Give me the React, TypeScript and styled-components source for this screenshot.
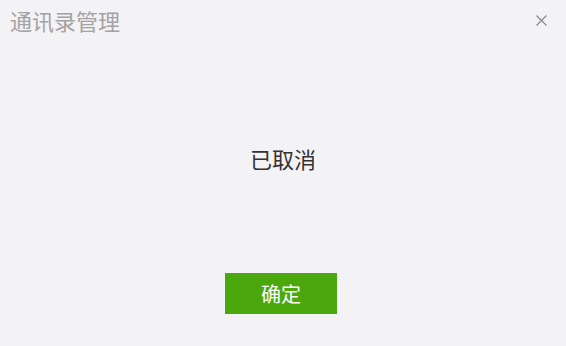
import React from "react";
import styled, { createGlobalStyle } from "styled-components";

const GlobalStyle = createGlobalStyle`
    html, body {
        margin: 0;
        padding: 0;
        background: #f3f2f5;
    }
    body {
        font-family: "Noto Sans CJK SC", "Noto Sans", sans-serif;
    }
`;

const Dialog = styled.div`
    width: 566px;
    height: 346px;
    display: flex;
    flex-direction: column;
    background: #f3f2f5;
    box-sizing: border-box;
`;

const HeaderRow = styled.div`
    display: flex;
    justify-content: space-between;
    align-items: flex-start;
    padding: 5px 18px 0 10px;
    height: 40px;
    box-sizing: border-box;
`;

const Title = styled.h1`
    margin: 0;
    font-size: 22px;
    line-height: 30px;
    font-weight: normal;
    color: #a3a3a3;
`;

const CloseButton = styled.button`
    border: none;
    background: none;
    padding: 0;
    margin-top: 9px;
    width: 13px;
    height: 13px;
    cursor: pointer;
    display: flex;
`;

const Body = styled.div`
    flex: 1;
    display: flex;
    flex-direction: column;
    align-items: center;
`;

const Message = styled.p`
    margin: 103px 0 0;
    font-size: 22px;
    line-height: 30px;
    color: #333333;
`;

const ConfirmButton = styled.button`
    margin-top: 100px;
    width: 112px;
    height: 41px;
    border: none;
    background: #4aa80c;
    color: #ffffff;
    font-family: inherit;
    font-size: 20px;
    cursor: pointer;
    transform: translateX(-2px);
`;

function App() {
    return (
        <>
            <GlobalStyle />
            <Dialog>
                <HeaderRow>
                    <Title>通讯录管理</Title>
                    <CloseButton aria-label="关闭">
                        <svg width="13" height="13" viewBox="0 0 13 13">
                            <path d="M1.5 1.5 L11.5 11.5 M11.5 1.5 L1.5 11.5" stroke="#8a8a8a" strokeWidth="1.3" />
                        </svg>
                    </CloseButton>
                </HeaderRow>
                <Body>
                    <Message>已取消</Message>
                    <ConfirmButton>确定</ConfirmButton>
                </Body>
            </Dialog>
        </>
    );
}

export default App;
